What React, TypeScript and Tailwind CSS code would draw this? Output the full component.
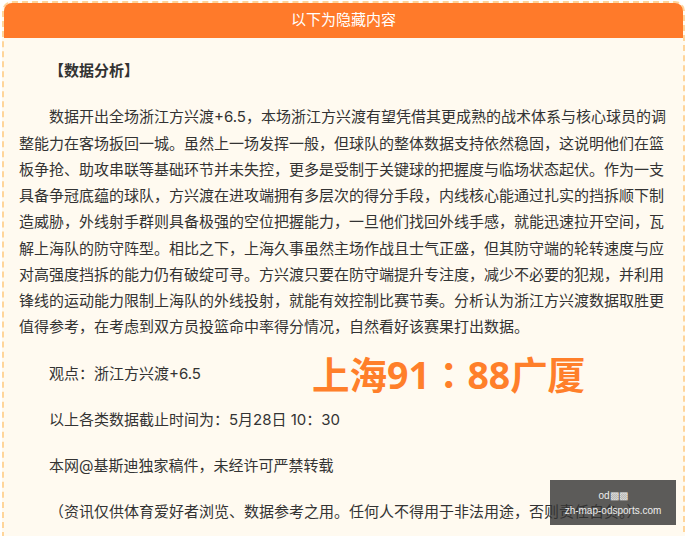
const paragraphs = [
  '观点：浙江方兴渡+6.5',
  '以上各类数据截止时间为：5月28日 10：30',
  '本网@基斯迪独家稿件，未经许可严禁转载',
  '（资讯仅供体育爱好者浏览、数据参考之用。任何人不得用于非法用途，否则责任自负。）',
];

export default function App() {
  return (
    <div className="h-[536px] w-[687px] overflow-hidden bg-white font-['Inter','Noto_Sans_CJK_SC',sans-serif] text-[15px] leading-[26.25px] text-[#333]">
      <div className="relative ml-[2px] mt-[1px] w-[683px] rounded-t-[10px] border-2 border-dashed border-[#ffd59a] bg-[#fffaf0]">
        {/* header bar */}
        <div className="flex h-[35px] items-center justify-center rounded-t-[8px] bg-[#ff7a2a] text-white">
          以下为隐藏内容
        </div>

        <div className="px-[15px] pt-[20px]">
          <p className="mb-[20px] indent-[30px] font-bold">【数据分析】</p>
          <p className="mb-[20px] indent-[30px]">
            数据开出全场浙江方兴渡+6.5，本场浙江方兴渡有望凭借其更成熟的战术体系与核心球员的调整能力在客场扳回一城。虽然上一场发挥一般，但球队的整体数据支持依然稳固，这说明他们在篮板争抢、助攻串联等基础环节并未失控，更多是受制于关键球的把握度与临场状态起伏。作为一支具备争冠底蕴的球队，方兴渡在进攻端拥有多层次的得分手段，内线核心能通过扎实的挡拆顺下制造威胁，外线射手群则具备极强的空位把握能力，一旦他们找回外线手感，就能迅速拉开空间，瓦解上海队的防守阵型。相比之下，上海久事虽然主场作战且士气正盛，但其防守端的轮转速度与应对高强度挡拆的能力仍有破绽可寻。方兴渡只要在防守端提升专注度，减少不必要的犯规，并利用锋线的运动能力限制上海队的外线投射，就能有效控制比赛节奏。分析认为浙江方兴渡数据取胜更值得参考，在考虑到双方员投篮命中率得分情况，自然看好该赛果打出数据。
          </p>
          {paragraphs.map((p) => (
            <p key={p} className="mb-[20px] indent-[30px]">
              {p}
            </p>
          ))}
        </div>

        {/* score overlay */}
        <div className="absolute left-[308px] top-[347px] font-['Open_Sans','Noto_Sans_CJK_TC',sans-serif] text-[37.5px] font-bold leading-[50px] text-[#ff7f2a]">
          上海91<span lang="zh-TW">：</span>88广厦
        </div>
      </div>

      {/* watermark */}
      <div className="absolute left-[550px] top-[480px] flex h-[45px] w-[126px] flex-col items-center justify-center bg-[#333]/80 font-['Liberation_Sans',sans-serif] text-[10px] leading-[15px] text-[#eee]">
        <span>od▩▩</span>
        <span className="whitespace-nowrap">zh-map-odsports.com</span>
      </div>
    </div>
  );
}
